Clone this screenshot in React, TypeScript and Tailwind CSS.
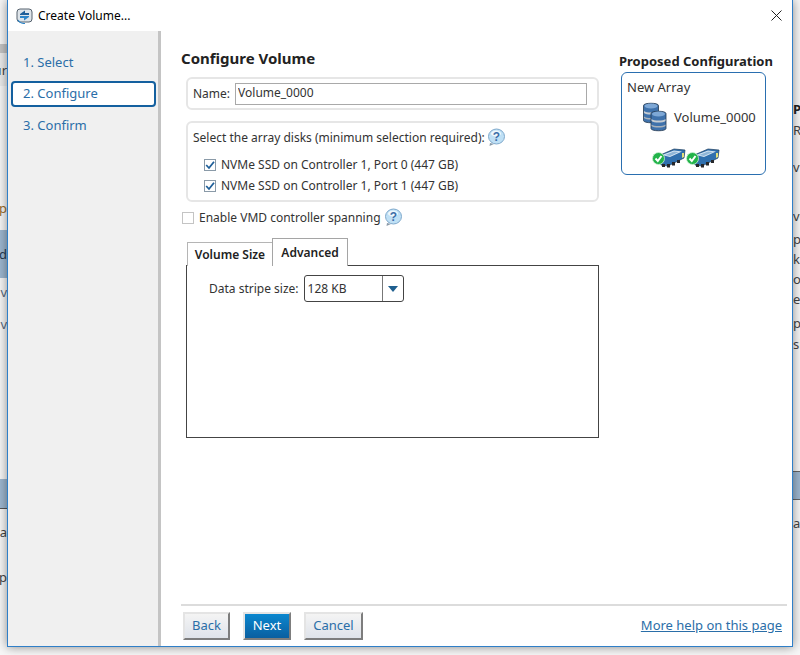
const font = "font-['Noto_Sans',sans-serif]";

const HelpIcon = () => (
  <svg width="19" height="19" viewBox="0 0 19 19" className="shrink-0">
    <path d="M3 15 L2.500 18 L7 16 Z" fill="#8a9aa8" />
    <ellipse cx="9.500" cy="8.500" rx="8" ry="7.500" fill="#bfe0f5" stroke="#7fa9cc" />
    <ellipse cx="9" cy="5.500" rx="5" ry="3" fill="#eef8fd" />
    <text x="9.500" y="13" textAnchor="middle" fontSize="12" fontWeight="700" fill="#3c6ea8" fontFamily="'Liberation Sans',sans-serif">?</text>
  </svg>
);

const Cylinder = ({ x, y }: { x: number; y: number }) => (
  <g transform={`translate(${x} ${y})`}>
    <path d="M0 3 C0 0 15 0 15 3 L15 18 C15 21 0 21 0 18 Z" fill="#3f72ac" stroke="#24384f" strokeWidth="0.800" />
    <ellipse cx="7.500" cy="3.500" rx="6.500" ry="2.500" fill="#7ea8d6" />
    <path d="M0.500 8.500 C3 10.500 12 10.500 14.500 8.500 L14.500 10.500 C12 12.500 3 12.500 0.500 10.500 Z" fill="#c6ccd2" />
    <path d="M0.500 14 C3 16 12 16 14.500 14 L14.500 15.500 C12 17.500 3 17.500 0.500 15.500 Z" fill="#aab2ba" />
  </g>
);

const DbIcon = () => (
  <svg width="26" height="31" viewBox="0 0 26 31" className="shrink-0">
    <Cylinder x={0.500} y={0.500} />
    <Cylinder x={8} y={8.500} />
  </svg>
);

const DriveIcon = () => (
  <svg width="34" height="21" viewBox="0 0 34 21" className="shrink-0">
    <path d="M6 9 L22 2 L33 3 L32 11 L16 19 L9 18 Z" fill="#2f6fae" stroke="#1d3d5f" strokeWidth="0.700" />
    <path d="M10 8 L22 3.500 L30 4.500 L18 10 Z" fill="#d8e6f2" />
    <path d="M13 8 L22 4.500 L27 5 L18 9 Z" fill="#8fb6d8" />
    <path d="M10 17 h3 v3 h-3 Z M15 17 h3 v3.500 h-3 Z M20 15 h3 v3.500 h-3 Z M25 13 h3 v3 h-3 Z" fill="#26272a" />
    <path d="M30 6 l2 0 l0 4 l-2 1 Z" fill="#e3e07a" />
    <circle cx="6.500" cy="11.500" r="6" fill="#22b34a" stroke="#c9f0d0" strokeWidth="0.800" />
    <path d="M3.500 11.500 L5.800 14 L9.500 9" fill="none" stroke="#ffffff" strokeWidth="2" />
  </svg>
);

const AppIcon = () => (
  <svg width="17" height="17" viewBox="0 0 17 17" className="shrink-0">
    <rect x="1" y="2" width="15" height="13" rx="3" fill="#dfe5ea" stroke="#56626e" />
    <path d="M4 7 L9 3.500 L9 6 L13 6 L13 8 L4 8 Z" fill="#1f5f99" />
    <path d="M13 10 L8 13.500 L8 11 L4 11 L4 9 L13 9 Z" fill="#2f86c9" />
    <path d="M2 13 C4 16.500 7 16.500 9 16.500" fill="none" stroke="#2f86c9" strokeWidth="1.200" />
  </svg>
);

const Check = ({ checked }: { checked?: boolean }) => (
  <span className={`flex h-3 w-3 shrink-0 items-center justify-center border ${checked ? "border-[#8a9aa8]" : "border-[#c4c4c4]"} bg-white`}>
    {checked && (
      <svg width="10" height="10" viewBox="0 0 10 10">
        <path d="M1.200 5 L4 8 L9 1.800" fill="none" stroke="#1f5f99" strokeWidth="1.800" />
      </svg>
    )}
  </span>
);

const Btn = ({ label, primary, width }: { label: string; primary?: boolean; width: string }) => (
  <button
    className={`${width} h-[28px] border-2 border-t-[#e4e4e4] border-l-[#e4e4e4] border-r-[#7d7d7d] border-b-[#7d7d7d] text-[13px] ${
      primary
        ? "bg-gradient-to-b from-[#0a87cf] to-[#0a5fa0] text-white"
        : "bg-gradient-to-b from-[#f4f4f4] to-[#dfe3ea] text-[#2a6ea8]"
    }`}
  >
    {label}
  </button>
);

const LeftPeek = () => (
  <div className="relative flex w-[7px] shrink-0 flex-col overflow-hidden bg-[#f7f7f7] text-[13px] leading-[18px] text-[#444]">
    <div className="mt-[44px] h-[9px] bg-[#c4c4c4]" />
    <div className="flex h-[33px] items-center justify-end whitespace-nowrap bg-[#ececec]">ur</div>
    <div className="mt-[113px] flex h-[18px] justify-end whitespace-nowrap text-[#9a6a28]">ip</div>
    <div className="mt-[13px] flex h-[48px] items-center justify-end bg-[#9db7d0] text-[#263a50]">d</div>
    <div className="mt-[5px] flex h-[18px] justify-end text-[#5a6a80]">v</div>
    <div className="mt-[14px] flex h-[18px] justify-end text-[#5a6a80]">v</div>
    <div className="mt-[146px] h-[30px] border-b border-[#555] bg-[#9db7d0]" />
    <div className="mt-[14px] flex h-[18px] justify-end whitespace-nowrap">ta</div>
    <div className="mt-[27px] flex h-[18px] justify-end">p</div>
  </div>
);

const RightPeek = () => (
  <div className="flex w-[7px] shrink-0 flex-col overflow-hidden bg-[#f7f7f7] text-[13px] leading-[18px] text-[#444]">
    <div className="mt-[100px] h-[18px] font-bold text-[#222]">P</div>
    <div className="mt-[3px] h-[18px]">R</div>
    <div className="mt-[19px] h-[18px]">v</div>
    <div className="mt-[31px] h-[18px] whitespace-nowrap">vo</div>
    <div className="mt-[5px] h-[18px]">p</div>
    <div className="mt-[2px] h-[18px]">k</div>
    <div className="mt-[2px] h-[18px] whitespace-nowrap">oc</div>
    <div className="mt-[2px] h-[18px] whitespace-nowrap">er</div>
    <div className="mt-[6px] h-[18px] whitespace-nowrap">pe</div>
    <div className="mt-[3px] h-[18px] whitespace-nowrap">si</div>
    <div className="mt-[118px] h-[29px] border-y border-[#666] bg-[#9db7d0]" />
    <div className="mt-[14px] h-[18px]">a</div>
  </div>
);

export default function App() {
  return (
    <div className={`flex h-[655px] w-[800px] overflow-hidden bg-[#f7f7f7] ${font}`}>
      <LeftPeek />
      <div className="z-10 flex h-[647px] w-[786px] shrink-0 flex-col border border-t-0 border-[#2f7fc8] bg-white text-[12px] text-[#333] shadow-[0_0_10px_rgba(0,0,0,0.45)]">
        <div className="flex h-[31px] shrink-0 items-center pl-[8px] pr-[10px]">
          <AppIcon />
          <span className="ml-[5px] text-black">Create Volume...</span>
          <svg width="11" height="11" viewBox="0 0 11 11" className="ml-auto">
            <path d="M0.500 0.500 L10.500 10.500 M10.500 0.500 L0.500 10.500" stroke="#222" />
          </svg>
        </div>
        <div className="flex min-h-0 flex-1">
          <div className="w-[153px] shrink-0 border-r-[3px] border-[#c4c4c4] bg-[#f0f0f0] pl-[3px] pt-[22px] text-[13px] text-[#2a6ea8]">
            <div className="flex h-[20px] items-center pl-[12px]">1. Select</div>
            <div className="mt-[8px] flex h-[26px] w-[145px] items-center rounded-[4px] border-2 border-[#14609f] bg-white pl-[10px]">2. Configure</div>
            <div className="mt-[9px] flex h-[20px] items-center pl-[12px]">3. Confirm</div>
          </div>
          <div className="flex min-w-0 flex-1 flex-col pl-[20px] pr-[5px]">
            <div className="flex flex-1">
              <div className="w-[418px] shrink-0">
                <h1 className="mt-[16px] h-[22px] text-[15px] leading-[22px] font-bold text-[#222]">Configure Volume</h1>
                <div className="ml-[5px] mt-[8px] flex h-[33px] items-center rounded-[6px] border-2 border-[#e6e6e6] pl-[5px] pr-[10px]">
                  <span>Name:</span>
                  <input
                    readOnly
                    value="Volume_0000"
                    className="ml-[5px] h-[22px] flex-1 border border-[#a9a9a9] pb-[2px] pl-[2px] text-[12px] text-[#333] outline-none"
                  />
                </div>
                <div className="ml-[5px] mt-[11px] h-[81px] rounded-[6px] border-2 border-[#e6e6e6] pl-[5px]">
                  <div className="mt-[5px] flex h-[19px] items-center gap-[2px]">
                    <span>Select the array disks (minimum selection required):</span>
                    <HelpIcon />
                  </div>
                  <div className="ml-[11px] mt-[7px] flex h-[21px] items-center gap-[5px]">
                    <Check checked />
                    <span>NVMe SSD on Controller 1, Port 0 (447 GB)</span>
                  </div>
                  <div className="ml-[11px] flex h-[21px] items-center gap-[5px]">
                    <Check checked />
                    <span>NVMe SSD on Controller 1, Port 1 (447 GB)</span>
                  </div>
                </div>
                <div className="ml-[1px] mt-[6px] flex h-[19px] items-center">
                  <Check />
                  <span className="ml-[5px]">Enable VMD controller spanning</span>
                  <span className="ml-[3px]"><HelpIcon /></span>
                </div>
                <div className="ml-[5px] mt-[11px] w-[413px]">
                  <div className="relative z-10 -mb-px ml-[1px] flex h-[28px] items-end font-semibold text-[#222]">
                    <div className="flex h-[24px] w-[86px] items-center justify-center border border-b-0 border-[#b5b5b5] bg-white">Volume Size</div>
                    <div className="-ml-px flex h-[28px] w-[76px] items-center justify-center border border-b-0 border-[#a5a5a5] bg-white">Advanced</div>
                  </div>
                  <div className="h-[173px] border border-[#444] pl-[22px] pt-[9px]">
                    <div className="flex h-[27px] items-center">
                      <span>Data stripe size:</span>
                      <div className="ml-[5px] flex h-[27px] w-[100px] items-center rounded-[3px] border border-[#444]">
                        <span className="flex-1 pl-[3px]">128 KB</span>
                        <span className="flex h-full w-[21px] items-center justify-center border-l border-[#777]">
                          <span className="h-0 w-0 border-x-[5px] border-t-[6px] border-x-transparent border-t-[#1f5f8f]" />
                        </span>
                      </div>
                    </div>
                  </div>
                </div>
              </div>
              <div className="ml-[20px] flex-1 pt-[20px]">
                <h2 className="h-[20px] text-[13px] leading-[20px] font-bold whitespace-nowrap text-[#222]">Proposed Configuration</h2>
                <div className="ml-[2px] mt-[1px] h-[103px] w-[145px] rounded-[6px] border border-[#2a6fb0] pl-[5px] pt-[5px] text-[13px]">
                  <div className="h-[18px] leading-[18px]">New Array</div>
                  <div className="ml-[16px] mt-[6px] flex items-center gap-[5px]">
                    <DbIcon />
                    <span>Volume_0000</span>
                  </div>
                  <div className="ml-[25px] mt-[14px] flex">
                    <DriveIcon />
                    <DriveIcon />
                  </div>
                </div>
              </div>
            </div>
            <div className="flex h-[42px] shrink-0 items-center border-t-2 border-[#dcdcdc]">
              <div className="ml-[2px]"><Btn label="Back" width="w-[47px]" /></div>
              <div className="ml-[13px]"><Btn label="Next" primary width="w-[48px]" /></div>
              <div className="ml-[13px]"><Btn label="Cancel" width="w-[59px]" /></div>
              <a className="ml-auto mr-[5px] text-[13px] text-[#2a6ea8] underline">More help on this page</a>
            </div>
          </div>
        </div>
      </div>
      <RightPeek />
    </div>
  );
}
